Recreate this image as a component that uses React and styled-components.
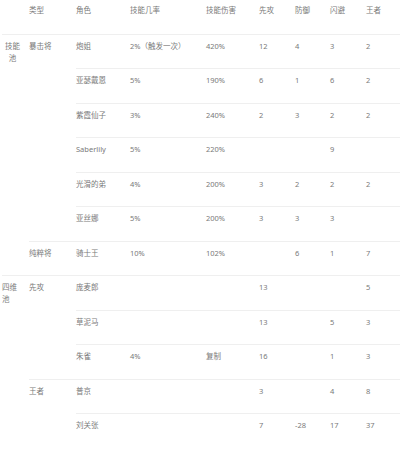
import styled, { createGlobalStyle } from "styled-components";

const GlobalStyle = createGlobalStyle`
  body {
    margin: 0;
    background: #fff;
    font-family: "Noto Sans", "Noto Sans CJK SC", sans-serif;
  }
`;

const Wrap = styled.div`
  padding-left: 2px;
  width: 398px;
`;

const Table = styled.table`
  width: 398px;
  border-collapse: collapse;
  table-layout: fixed;
  font-size: 7.5px;
  line-height: 12px;
  color: #7a7a7a;
`;

const Th = styled.th`
  font-weight: normal;
  text-align: left;
  vertical-align: top;
  padding: 4px 0 0;
  height: 34px;
  box-sizing: border-box;
`;

const Row = styled.tr`
  height: 34.5px;
`;

const Td = styled.td`
  text-align: left;
  vertical-align: top;
  padding: 5px ${(p) => (p.$group ? 8 : 0)}px 0 ${(p) => p.$indent || 0}px;
  border-top: 1px solid #efefef;
  word-break: break-all;
  box-sizing: border-box;
`;

const GroupText = styled.span`
  display: block;
  text-align: ${(p) => (p.$center ? "center" : "left")};
`;

const cols = [27, 47, 54, 76, 53, 36, 35, 36, 34];

const headers = ["", "类型", "角色", "技能几率", "技能伤害", "先攻", "防御", "闪避", "王者"];

// each row: [group, type, name, rate, dmg, a, b, c, d]; null = covered by rowspan
const rows = [
  [{ t: "技能池", span: 7, group: true, center: true, indent: 2 }, { t: "暴击将", span: 6 }, "炮姐", "2%（触发一次）", "420%", "12", "4", "3", "2"],
  [null, null, "亚瑟戴恩", "5%", "190%", "6", "1", "6", "2"],
  [null, null, "紫霞仙子", "3%", "240%", "2", "3", "2", "2"],
  [null, null, "Saberlily", "5%", "220%", "", "", "9", ""],
  [null, null, "光滑的弟", "4%", "200%", "3", "2", "2", "2"],
  [null, null, "亚丝娜", "5%", "200%", "3", "3", "3", ""],
  [null, "纯粹将", "骑士王", "10%", "102%", "", "6", "1", "7"],
  [{ t: "四维池", span: 5, group: true }, { t: "先攻", span: 3 }, "庞麦郎", "", "", "13", "", "", "5"],
  [null, null, "草泥马", "", "", "13", "", "5", "3"],
  [null, null, "朱雀", "4%", "复制", "16", "", "1", "3"],
  [null, { t: "王者", span: 2 }, "普京", "", "", "3", "", "4", "8"],
  [null, null, "刘关张", "", "", "7", "-28", "17", "37"],
];

export default function App() {
  return (
    <>
      <GlobalStyle />
      <Wrap>
        <Table>
          <colgroup>
            {cols.map((w, i) => (
              <col key={i} style={{ width: w }} />
            ))}
          </colgroup>
          <thead>
            <tr>
              {headers.map((h, i) => (
                <Th key={i}>{h}</Th>
              ))}
            </tr>
          </thead>
          <tbody>
            {rows.map((r, ri) => (
              <Row key={ri}>
                {r.map((c, ci) => {
                  if (c === null) return null;
                  if (typeof c === "object") {
                    return (
                      <Td key={ci} rowSpan={c.span} $indent={c.indent} $group={c.group}>
                        {c.group ? <GroupText $center={c.center}>{c.t}</GroupText> : c.t}
                      </Td>
                    );
                  }
                  return <Td key={ci}>{c}</Td>;
                })}
              </Row>
            ))}
          </tbody>
        </Table>
      </Wrap>
    </>
  );
}
